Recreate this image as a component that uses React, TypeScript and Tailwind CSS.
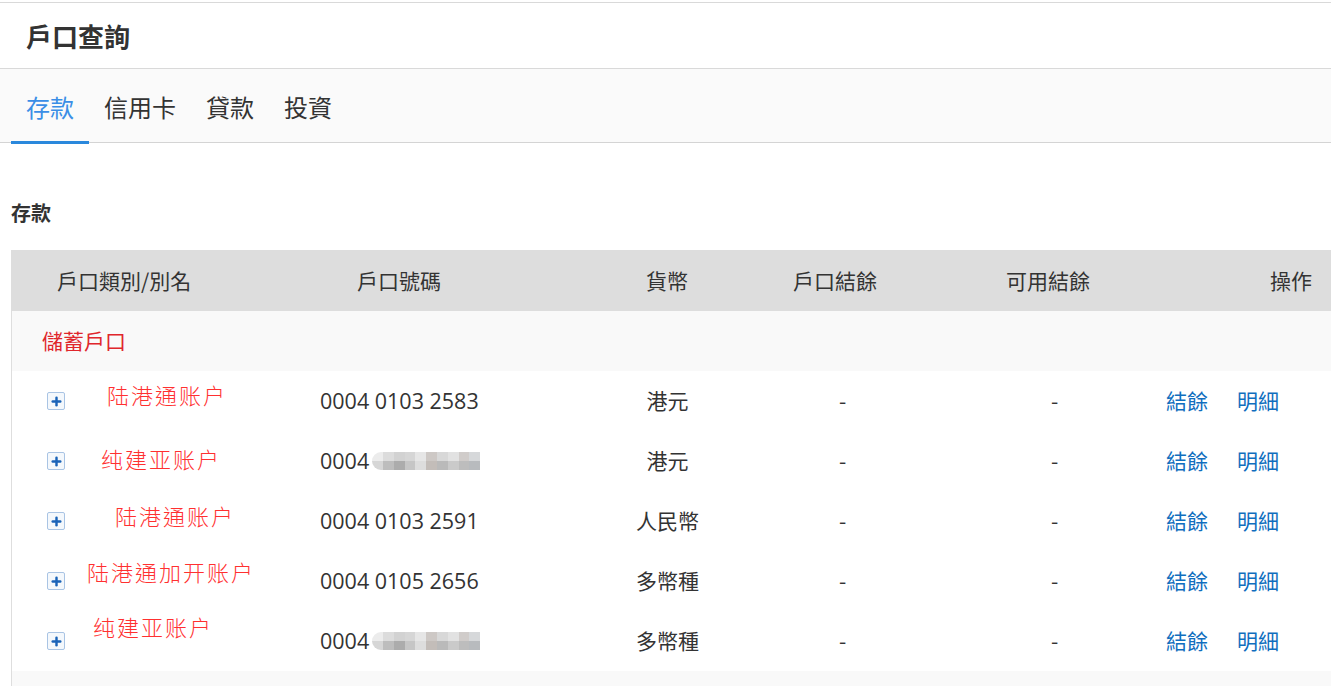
import { Plus } from 'lucide-react';

const tabs = ['存款', '信用卡', '貸款', '投資'];

type Account = {
  name: string;
  nameClass: string;
  number: string;
  masked?: boolean;
  currency: string;
};

const accounts: Account[] = [
  { name: '陆港通账户', nameClass: 'ml-[42px] -mt-[14px]', number: '0004 0103 2583', currency: '港元' },
  { name: '纯建亚账户', nameClass: 'ml-[36px] -mt-[6px]', number: '0004', masked: true, currency: '港元' },
  { name: '陆港通账户', nameClass: 'ml-[50px] -mt-[12px]', number: '0004 0103 2591', currency: '人民幣' },
  { name: '陆港通加开账户', nameClass: 'ml-[22px] -mt-[20px]', number: '0004 0105 2656', currency: '多幣種' },
  { name: '纯建亚账户', nameClass: 'ml-[28px] -mt-[30px]', number: '0004', masked: true, currency: '多幣種' },
];

const mosaicTop = ['#ececec', '#dcdcdc', '#d2d2d2', '#d6d6d6', '#e6e6e6', '#cdc8c5', '#d8d8d8', '#e2e2e2', '#d0ccca', '#d6d8da'];
const mosaicBottom = ['#d6d6d6', '#bdbdbd', '#acacac', '#c6c6c6', '#dddddd', '#c3bdb9', '#bababa', '#cacaca', '#bdbdbd', '#b8bbbe'];

const cjk = "font-['Noto_Sans_CJK_TC','Noto_Sans_CJK_SC',sans-serif]";

function Mosaic() {
  return (
    <div className="ml-[3px] grid grid-cols-10 w-[108px] h-[18px] rounded-l-full overflow-hidden blur-[0.6px]">
      {mosaicTop.map((c, i) => (
        <div key={'t' + i} style={{ background: c }} />
      ))}
      {mosaicBottom.map((c, i) => (
        <div key={'b' + i} style={{ background: c }} />
      ))}
    </div>
  );
}

export default function App() {
  return (
    <div className={`w-[1331px] h-[686px] overflow-hidden bg-white text-[#333333] ${cjk}`}>
      {/* Page title */}
      <div className="mt-[2px] border-t border-[#d9d9d9] h-[67px] flex items-center px-[26px] border-b">
        <h1 className="text-[26px] font-bold text-[#333333] leading-none">戶口查詢</h1>
      </div>

      {/* Tabs */}
      <div className="h-[74px] pt-[2px] bg-[#fafafa] border-b border-[#d4d4d4] flex items-stretch px-[11px]">
        {tabs.map((t, i) => (
          <div
            key={t}
            className={
              i === 0
                ? 'relative flex items-center px-[15px] text-[24px] text-[#3a8ee6]'
                : 'relative flex items-center px-[15px] text-[24px] text-[#333333]'
            }
          >
            {t}
            {i === 0 && <div className="absolute left-0 right-0 -bottom-[2px] h-[3px] bg-[#2a88dc]" />}
          </div>
        ))}
      </div>

      {/* Section */}
      <div className="pl-[11px] pt-[60px]">
        <h2 className="text-[20px] font-bold leading-none">存款</h2>

        <div className="mt-[27px]">
          {/* Table head */}
          <div className="grid grid-cols-[289px_300px_140px_210px_190px_191px] h-[61px] bg-[#dddddd] items-center text-[21px] text-[#333333]">
            <div className="pl-[46px]">戶口類別/別名</div>
            <div className="pl-[57px]">戶口號碼</div>
            <div className="pl-[46px]">貨幣</div>
            <div className="pl-[53px]">戶口結餘</div>
            <div className="pl-[56px]">可用結餘</div>
            <div className="pl-[130px]">操作</div>
          </div>

          <div className="border-l border-[#dedede]">
            {/* Group row */}
            <div className="h-[60px] bg-[#f9f9f9] flex items-center pl-[30px] text-[21px] text-[#e0262c]">
              儲蓄戶口
            </div>

            {accounts.map((a, i) => (
              <div
                key={i}
                className="grid grid-cols-[288px_300px_140px_210px_190px_191px] h-[60px] items-center text-[21px]"
              >
                <div className="flex items-center pl-[35px]">
                  <span className="w-[18px] h-[18px] shrink-0 flex items-center justify-center border border-[#a9c4e4] bg-[#f4f8fc] rounded-[2px]">
                    <Plus size={13} strokeWidth={4.5} className="text-[#1a63b8]" />
                  </span>
                  <span
                    className={`${a.nameClass} whitespace-nowrap text-[22px] tracking-[2px] font-light text-[#ff3030]`}
                  >
                    {a.name}
                  </span>
                </div>
                <div className="pl-[20px] flex items-center font-['Open_Sans',sans-serif] text-[21.5px] text-[#333333]">
                  {a.number}
                  {a.masked && <Mosaic />}
                </div>
                <div className="text-center pr-[5px]">{a.currency}</div>
                <div className="pl-[99px]">-</div>
                <div className="pl-[101px]">-</div>
                <div className="pl-[26px] flex gap-[29px] text-[#106ebe]">
                  <span>結餘</span>
                  <span>明細</span>
                </div>
              </div>
            ))}

            <div className="h-[60px] bg-[#f9f9f9]" />
          </div>
        </div>
      </div>
    </div>
  );
}
